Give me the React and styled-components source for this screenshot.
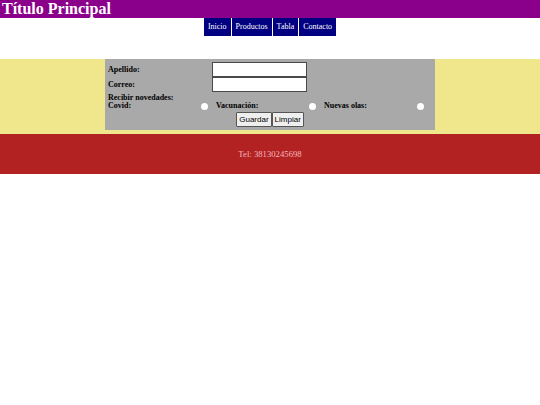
import React from 'react';
import styled, { createGlobalStyle } from 'styled-components';

const GlobalStyle = createGlobalStyle`
  body {
    margin: 0;
    background: #ffffff;
    font-family: "Liberation Serif", "Times New Roman", serif;
  }
`;

const Header = styled.header`
  background-color: #8b008b;
  height: 18px;
`;

const Title = styled.h1`
  margin: 0;
  padding-left: 2px;
  font-size: 16px;
  line-height: 18px;
  font-weight: bold;
  color: #ffffff;
`;

const Nav = styled.nav`
  display: flex;
  justify-content: center;
`;

const NavList = styled.ul`
  display: flex;
  margin: 0;
  padding: 0;
  list-style: none;
  background-color: #000080;
`;

const NavItem = styled.li`
  padding: 0 4px;
  height: 18px;
  line-height: 18px;
  font-size: 8px;
  color: #ffffff;
  border-left: ${(p) => (p.first ? 'none' : '1px solid #ffffff')};
`;

const Section = styled.section`
  margin-top: 23px;
  background-color: #f0e68c;
  padding-bottom: 4px;
`;

const Form = styled.form`
  width: 330px;
  margin: 0 auto;
  padding: 3px;
  box-sizing: border-box;
  background-color: #a9a9a9;
`;

const FieldRow = styled.div`
  display: grid;
  grid-template-columns: 104px 95px;
  align-items: center;
  height: 15px;
`;

const Label = styled.label`
  font-size: 8px;
  line-height: 8px;
  font-weight: bold;
  color: #000000;
`;

const TextInput = styled.input`
  width: 95px;
  height: 15px;
  box-sizing: border-box;
  border: 1px solid #4a4a4a;
  background: #ffffff;
  padding: 0;
  margin: 0;
`;

const Caption = styled.div`
  margin-top: 2px;
  font-size: 8px;
  line-height: 8px;
  font-weight: bold;
`;

const RadioRow = styled.div`
  display: grid;
  grid-template-columns: repeat(3, 1fr);
  height: 8px;
`;

const RadioGroup = styled.div`
  display: flex;
  justify-content: space-between;
  align-items: center;
`;

const Radio = styled.input`
  appearance: none;
  width: 7px;
  height: 7px;
  margin: 0 8px 0 0;
  border: none;
  border-radius: 50%;
  background: #ffffff;
`;

const Buttons = styled.div`
  display: flex;
  justify-content: center;
  margin-top: 2px;
`;

const Button = styled.button`
  height: 15px;
  padding: 0 2px;
  margin: 0;
  border: 1px solid #555555;
  border-radius: 1px;
  background: #efefef;
  font-family: "Liberation Sans", Arial, sans-serif;
  font-size: 8px;
  color: #000000;
`;

const Footer = styled.footer`
  height: 40px;
  display: flex;
  align-items: center;
  justify-content: center;
  background-color: #b22222;
  color: #f7b6bf;
  font-size: 8.7px;
`;

const links = ['Inicio', 'Productos', 'Tabla', 'Contacto'];

const App = () => {
  return (
    <>
      <GlobalStyle />
      <Header>
        <Title>Título Principal</Title>
      </Header>
      <Nav>
        <NavList>
          {links.map((l, i) => (
            <NavItem key={l} first={i === 0}>{l}</NavItem>
          ))}
        </NavList>
      </Nav>
      <Section>
        <Form onSubmit={(e) => e.preventDefault()}>
          <FieldRow>
            <Label>Apellido:</Label>
            <TextInput type="text" />
          </FieldRow>
          <FieldRow>
            <Label>Correo:</Label>
            <TextInput type="text" />
          </FieldRow>
          <Caption>Recibir novedades:</Caption>
          <RadioRow>
            <RadioGroup>
              <Label>Covid:</Label>
              <Radio type="radio" name="nov" />
            </RadioGroup>
            <RadioGroup>
              <Label>Vacunación:</Label>
              <Radio type="radio" name="nov" />
            </RadioGroup>
            <RadioGroup>
              <Label>Nuevas olas:</Label>
              <Radio type="radio" name="nov" />
            </RadioGroup>
          </RadioRow>
          <Buttons>
            <Button type="submit">Guardar</Button>
            <Button type="reset">Limpiar</Button>
          </Buttons>
        </Form>
      </Section>
      <Footer>Tel: 38130245698</Footer>
    </>
  );
};

export default App;
